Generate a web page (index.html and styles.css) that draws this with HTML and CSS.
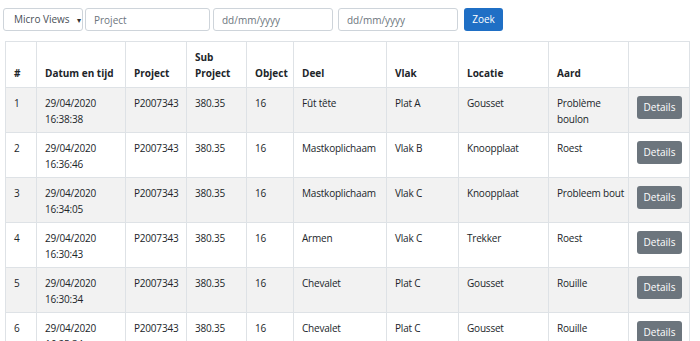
FILE: index.html
```html
<!DOCTYPE html>
<html lang="nl">
<head>
<meta charset="utf-8">
<title>Micro Views</title>
<link rel="stylesheet" href="styles.css">
</head>
<body>
<div class="page">
  <form class="toolbar">
    <div class="select">Micro Views <span class="caret">▾</span></div>
    <input class="field field-project" type="text" placeholder="Project">
    <input class="field field-date" type="text" placeholder="dd/mm/yyyy">
    <input class="field field-date" type="text" placeholder="dd/mm/yyyy">
    <button class="btn btn-primary" type="button">Zoek</button>
  </form>
  <table class="grid">
    <colgroup>
      <col class="c-nr"><col class="c-date"><col class="c-proj"><col class="c-sub"><col class="c-obj"><col class="c-deel"><col class="c-vlak"><col class="c-loc"><col class="c-aard"><col class="c-act">
    </colgroup>
    <thead>
      <tr><th>#</th><th>Datum en tijd</th><th>Project</th><th>Sub Project</th><th>Object</th><th>Deel</th><th>Vlak</th><th>Locatie</th><th>Aard</th><th></th></tr>
    </thead>
    <tbody>
      <tr><td>1</td><td>29/04/2020 16:38:38</td><td>P2007343</td><td>380.35</td><td>16</td><td>Fût tête</td><td>Plat A</td><td>Gousset</td><td>Problème boulon</td><td><button class="btn btn-secondary" type="button">Details</button></td></tr>
      <tr><td>2</td><td>29/04/2020 16:36:46</td><td>P2007343</td><td>380.35</td><td>16</td><td>Mastkoplichaam</td><td>Vlak B</td><td>Knoopplaat</td><td>Roest</td><td><button class="btn btn-secondary" type="button">Details</button></td></tr>
      <tr><td>3</td><td>29/04/2020 16:34:05</td><td>P2007343</td><td>380.35</td><td>16</td><td>Mastkoplichaam</td><td>Vlak C</td><td>Knoopplaat</td><td>Probleem bout</td><td><button class="btn btn-secondary" type="button">Details</button></td></tr>
      <tr><td>4</td><td>29/04/2020 16:30:43</td><td>P2007343</td><td>380.35</td><td>16</td><td>Armen</td><td>Vlak C</td><td>Trekker</td><td>Roest</td><td><button class="btn btn-secondary" type="button">Details</button></td></tr>
      <tr><td>5</td><td>29/04/2020 16:30:34</td><td>P2007343</td><td>380.35</td><td>16</td><td>Chevalet</td><td>Plat C</td><td>Gousset</td><td>Rouille</td><td><button class="btn btn-secondary" type="button">Details</button></td></tr>
      <tr><td>6</td><td>29/04/2020 16:25:34</td><td>P2007343</td><td>380.35</td><td>16</td><td>Chevalet</td><td>Plat C</td><td>Gousset</td><td>Rouille</td><td><button class="btn btn-secondary" type="button">Details</button></td></tr>
    </tbody>
  </table>
</div>
</body>
</html>
```
FILE: styles.css
```css
* { box-sizing: border-box; }
html, body { margin: 0; padding: 0; background: #fff; }
body {
  font-family: "Segoe UI", "Open Sans", "Noto Sans", sans-serif;
  font-size: 10px;
  color: #212529;
  line-height: 15.5px;
}
.page { padding: 8px 0 0 3px; }
.toolbar {
  display: flex;
  align-items: center;
  height: 23px;
  margin: 0 0 10px 0;
}
.select {
  width: 80px;
  height: 23px;
  border: 1px solid #ced4da;
  border-radius: 3px;
  padding: 0 0 0 10px;
  display: flex;
  align-items: center;
  color: #495057;
  margin-right: 2px;
}
.caret { font-size: 8px; margin-left: 7px; color: #333; }
.field {
  height: 23px;
  border: 1px solid #ced4da;
  border-radius: 3px;
  padding: 0 8px;
  font: inherit;
  color: #495057;
  background: #fff;
}
.field::placeholder { color: #6c757d; opacity: 1; }
.field-project { width: 125px; margin-right: 3px; }
.field-date { width: 120px; margin-right: 5px; }
.btn {
  font: inherit;
  border: 0;
  border-radius: 3px;
  color: #fff;
  height: 23px;
  cursor: pointer;
}
.btn-primary {
  background: #1f6fc5;
  width: 39px;
  padding: 0;
  margin-left: 1px;
}
.btn-secondary {
  background: #6c757d;
  display: block;
  width: 45px;
  padding: 0;
}
.grid {
  margin-left: 2px;
  width: 684px;
  table-layout: fixed;
  border-collapse: collapse;
}
.c-nr { width: 31px; }
.c-date { width: 89px; }
.c-proj { width: 61px; }
.c-sub { width: 60px; }
.c-obj { width: 47px; }
.c-deel { width: 93px; }
.c-vlak { width: 72px; }
.c-loc { width: 90px; }
.c-aard { width: 80px; }
.c-act { width: 61px; }
.grid th, .grid td {
  border: 1px solid #dee2e6;
  padding: 8px 3px 5px 8px;
  text-align: left;
}
.grid th {
  font-weight: 700;
  vertical-align: bottom;
  padding-bottom: 6px;
}
.grid td { vertical-align: top; letter-spacing: -0.2px; }
.grid td .btn { letter-spacing: 0; }
.grid tbody tr:nth-child(odd) { background: #f2f2f2; }
```
